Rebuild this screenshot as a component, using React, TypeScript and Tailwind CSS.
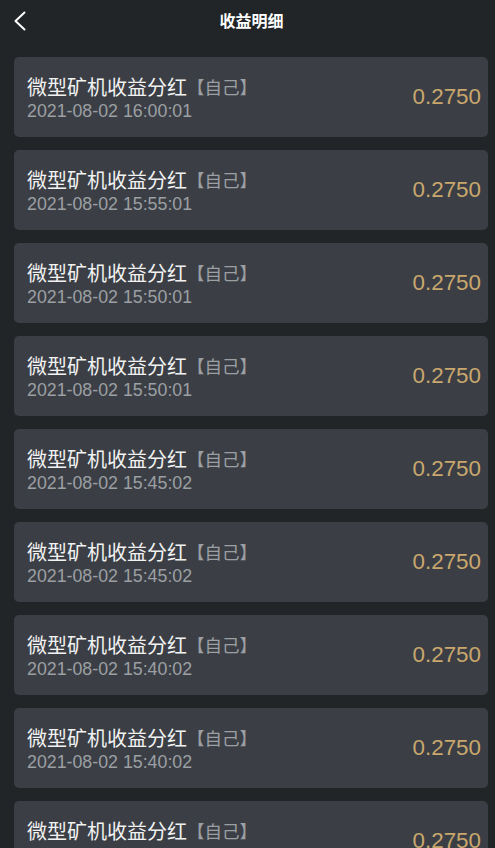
const records = [
  "2021-08-02 16:00:01",
  "2021-08-02 15:55:01",
  "2021-08-02 15:50:01",
  "2021-08-02 15:50:01",
  "2021-08-02 15:45:02",
  "2021-08-02 15:45:02",
  "2021-08-02 15:40:02",
  "2021-08-02 15:40:02",
  "2021-08-02 15:35:01",
];

function RecordCard({ time }: { time: string }) {
  return (
    <div className="ml-[14px] mr-[7px] h-[80px] rounded-[5px] bg-[#3b3f45] pl-[13px] pr-[7px] flex items-center justify-between">
      <div className="flex flex-col pt-[5px]">
        <div className="flex items-center leading-[23px]">
          <span className="text-[20px] text-[#f2f2f2]">微型矿机收益分红</span>
          <span className="text-[17.5px] text-[#9c9fa3]">【自己】</span>
        </div>
        <div className="text-[17.8px] leading-[23px] text-[#9c9fa3]">{time}</div>
      </div>
      <div className="text-[22.4px] text-[#c9a76d]">0.2750</div>
    </div>
  );
}

export default function App() {
  return (
    <div
      className="min-h-screen bg-[#212527] pb-6"
      style={{ fontFamily: '"Liberation Sans", "Noto Sans CJK SC", sans-serif' }}
    >
      {/* 顶部导航 */}
      <div className="relative h-[44px] flex items-center justify-center pl-[8px]">
        <svg
          width="30"
          height="40"
          viewBox="0 0 30 40"
          className="absolute left-0 top-0"
          fill="none"
          stroke="white"
          strokeWidth="2"
          strokeLinecap="round"
          strokeLinejoin="round"
        >
          <polyline points="24.5,12.5 15.5,21 24.5,29.5" />
        </svg>
        <span className="text-[16px] font-bold text-white">收益明细</span>
      </div>

      <div className="flex flex-col gap-[13px] pt-[13px]">
        {records.map((t, i) => (
          <RecordCard key={i} time={t} />
        ))}
      </div>
    </div>
  );
}
